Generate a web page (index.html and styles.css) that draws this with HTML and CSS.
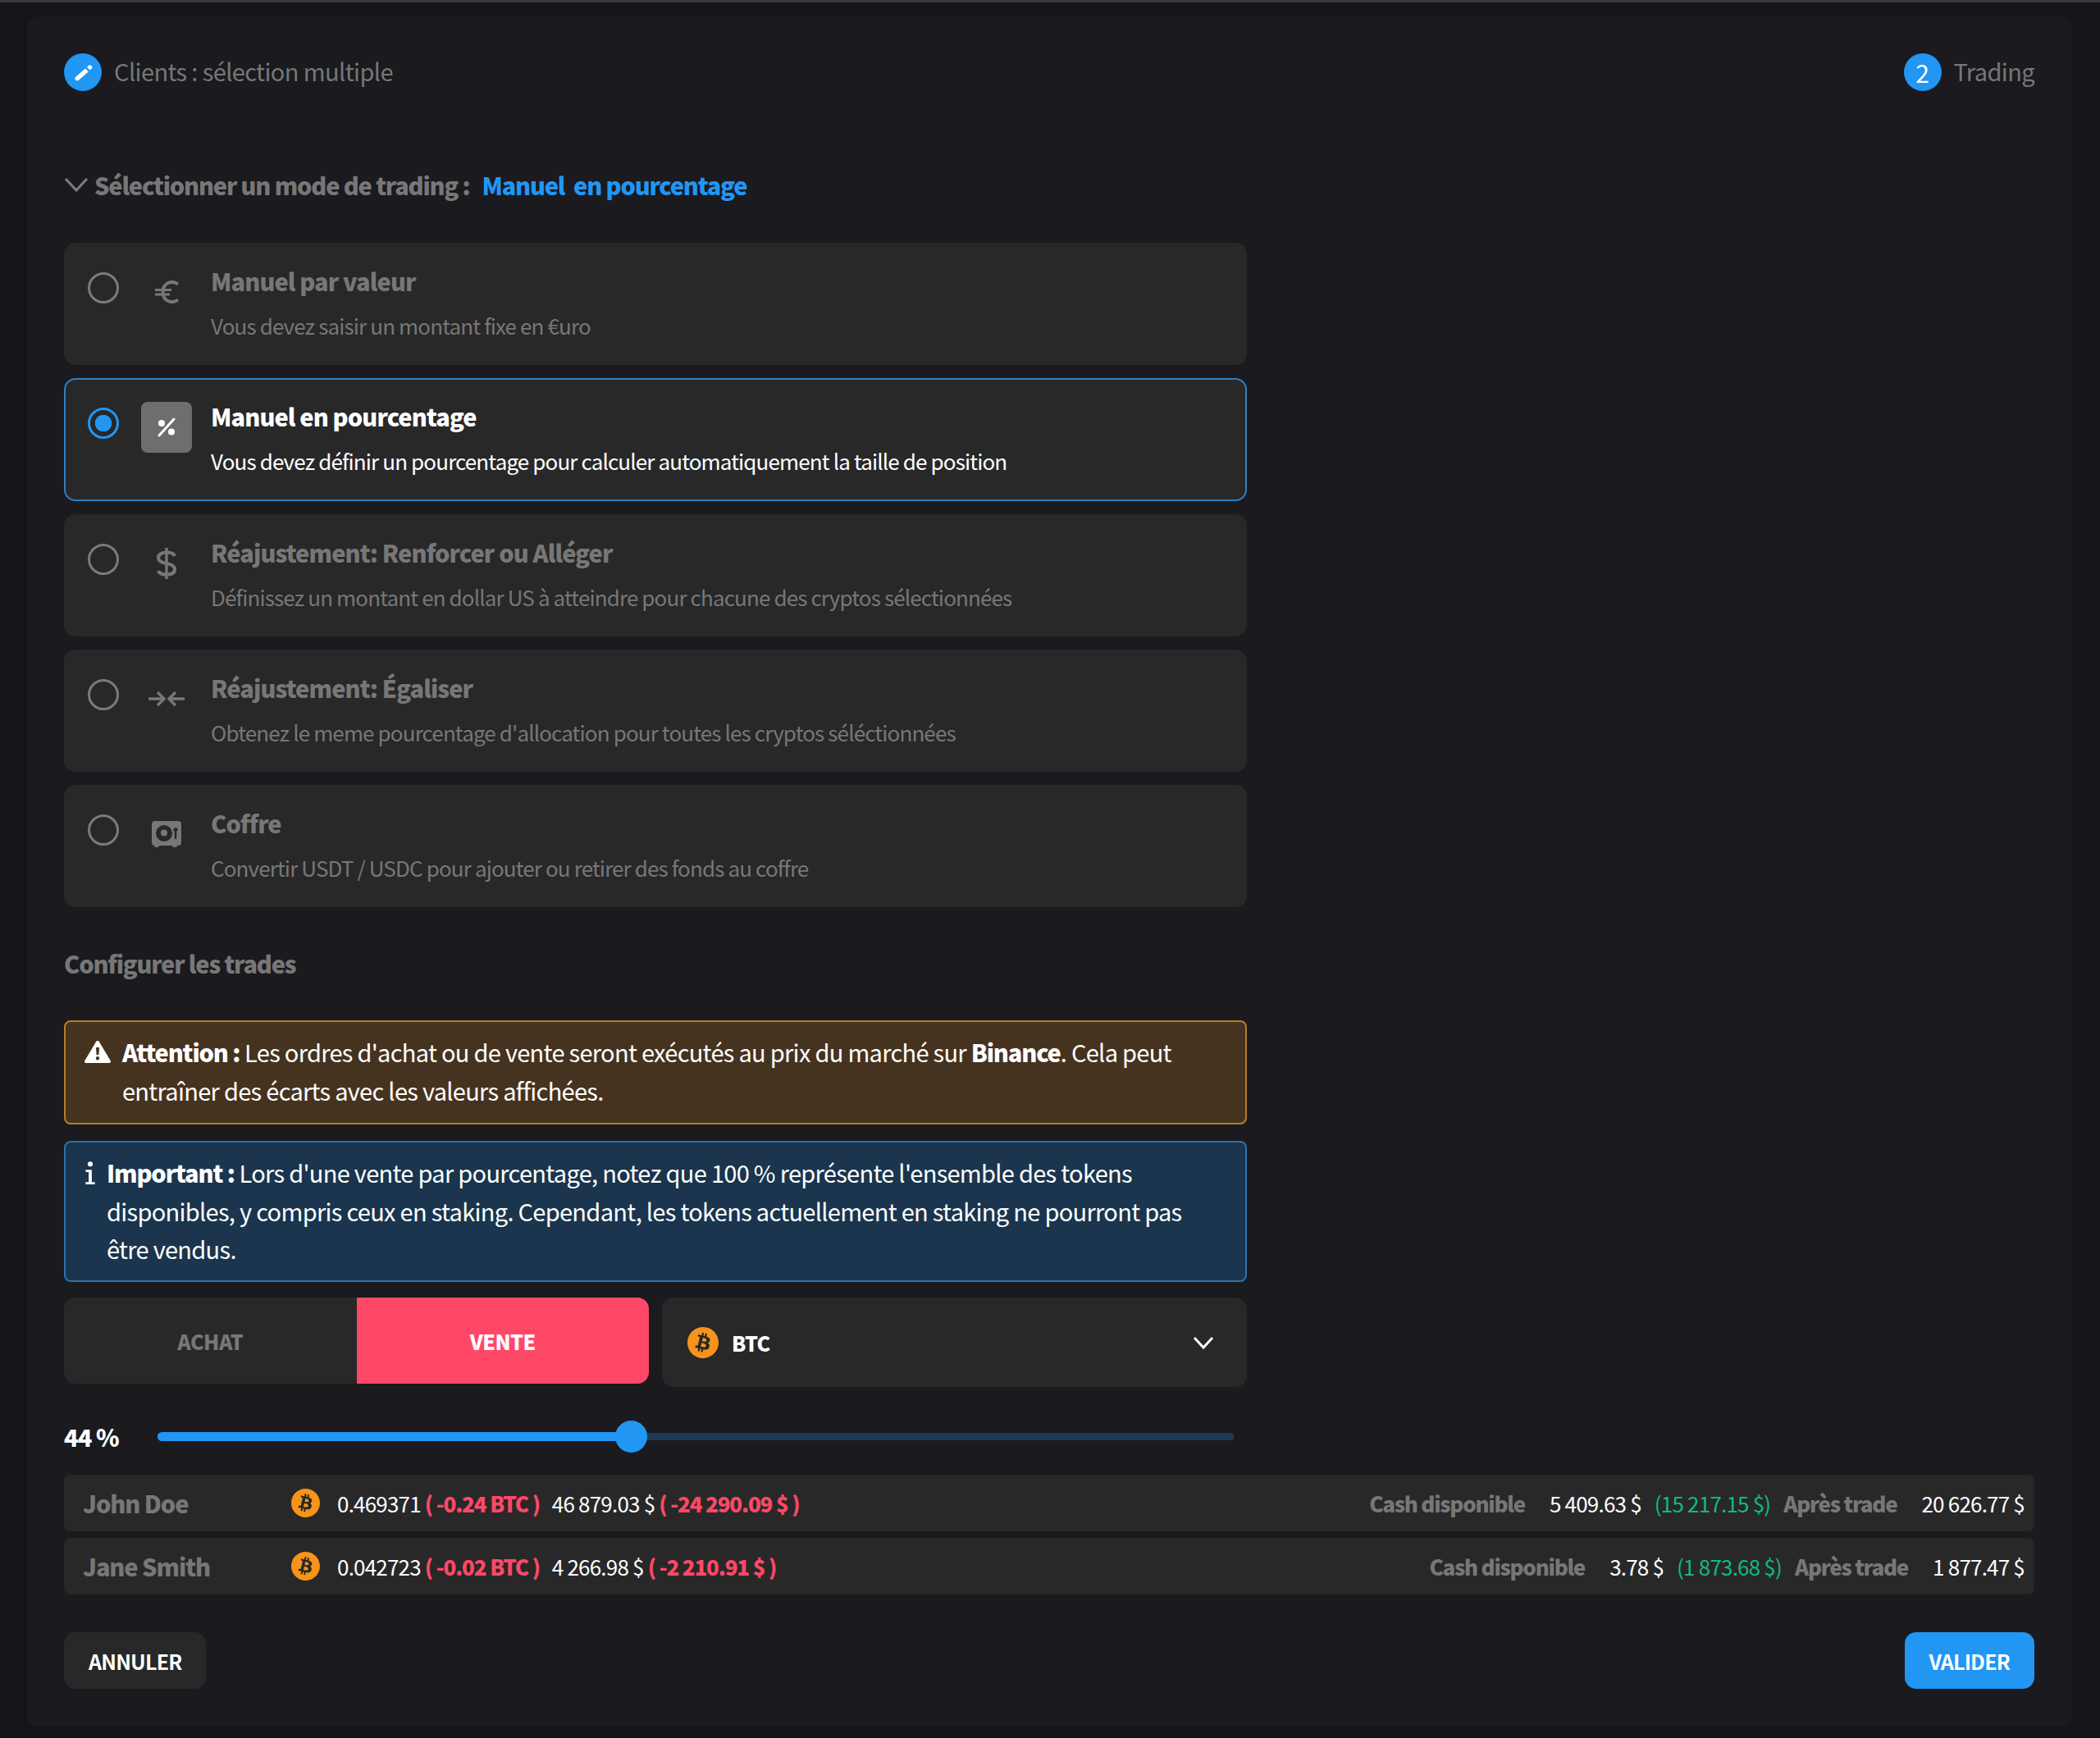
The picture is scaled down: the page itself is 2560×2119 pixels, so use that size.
FILE: index.html
```html
<!DOCTYPE html>
<html lang="fr">
<head>
<meta charset="utf-8">
<title>Trading</title>
<link rel="stylesheet" href="styles.css">
</head>
<body>
<svg class="defs" width="0" height="0" aria-hidden="true">
  <symbol id="btc" viewBox="0 0 24 24"><path fill="#f7931a" d="M23.638 14.904c-1.602 6.43-8.113 10.34-14.542 8.736C2.67 22.05-1.244 15.525.362 9.105 1.962 2.67 8.475-1.243 14.9.358c6.43 1.605 10.342 8.115 8.738 14.548v-.002zm-6.35-4.613c.24-1.59-.974-2.45-2.64-3.03l.54-2.153-1.315-.33-.525 2.107c-.345-.087-.705-.167-1.064-.25l.526-2.127-1.32-.33-.54 2.165c-.285-.067-.565-.132-.84-.2l-1.815-.45-.35 1.407s.975.225.955.236c.535.136.63.486.615.766l-1.477 5.92c-.075.166-.24.406-.614.314.015.02-.96-.24-.96-.24l-.66 1.51 1.71.426.93.242-.54 2.19 1.32.327.54-2.17c.36.1.705.19 1.05.273l-.51 2.154 1.32.33.545-2.19c2.24.427 3.93.257 4.64-1.774.57-1.637-.03-2.58-1.217-3.196.854-.193 1.5-.76 1.68-1.93h.01zm-3.01 4.22c-.404 1.64-3.157.75-4.05.53l.72-2.9c.896.23 3.757.67 3.33 2.37zm.41-4.24c-.37 1.49-2.662.735-3.405.55l.654-2.64c.744.18 3.137.524 2.75 2.084v.006z"/></symbol>
</svg>
<div class="topbar"></div>
<main class="panel">
  <header class="steps">
    <div class="step">
      <span class="step-dot"><svg width="28" height="28" viewBox="0 0 28 28"><path d="M4.500 23.500v-3L17 9.500l3.700 4L8 24.500z" fill="#fff"/><path d="M19 7.700l2.200-1.900a2 2 0 0 1 2.800.2l.9 1a2 2 0 0 1-.2 2.800l-2.100 1.800z" fill="#fff"/></svg></span>
      <span class="step-label">Clients : sélection multiple</span>
    </div>
    <div class="step">
      <span class="step-dot">2</span>
      <span class="step-label">Trading</span>
    </div>
  </header>

  <h2 class="mode-heading">
    <svg class="mode-chevron" width="30" height="20" viewBox="0 0 30 20"><path d="M2 3l13 14L28 3" fill="none" stroke="#7d7d7d" stroke-width="3"/></svg>
    <span>Sélectionner un mode de trading :</span>
    <span class="mode-value">Manuel&nbsp; en pourcentage</span>
  </h2>

  <section class="options">
    <article class="option">
      <span class="radio"></span>
      <span class="opt-icon"><svg width="32" height="28" viewBox="0 0 32 28"><path d="M30 4.500C26.500 1.800 22 1.300 18 3c-4.500 2-6.500 6-6.500 11s2 9 6.500 11c4 1.700 8.500 1.200 12-1.500" fill="none" stroke="#777" stroke-width="4"/><path d="M2 11.500h20M2 17h18" stroke="#777" stroke-width="3"/></svg></span>
      <div class="opt-text"><h3>Manuel par valeur</h3><p>Vous devez saisir un montant fixe en €uro</p></div>
    </article>
    <article class="option active">
      <span class="radio"></span>
      <span class="opt-icon"><svg width="26" height="26" viewBox="0 0 26 26"><path d="M4 23L22 3" stroke="#fff" stroke-width="3" stroke-linecap="round"/><circle cx="7" cy="8" r="4" fill="#fff"/><circle cx="19" cy="18.500" r="4" fill="#fff"/></svg></span>
      <div class="opt-text"><h3>Manuel en pourcentage</h3><p>Vous devez définir un pourcentage pour calculer automatiquement la taille de position</p></div>
    </article>
    <article class="option">
      <span class="radio"></span>
      <span class="opt-icon"><svg width="26" height="40" viewBox="0 0 26 40"><path d="M13 1v38" stroke="#777" stroke-width="3.400"/><path d="M23 11c-1-3-5-4.500-10-4.500S3 8.500 3 13s4 6 10 7 10 2.500 10 7-4 6.500-10 6.500S4 32 3 29" fill="none" stroke="#777" stroke-width="4.200"/></svg></span>
      <div class="opt-text"><h3>Réajustement: Renforcer ou Alléger</h3><p>Définissez un montant en dollar US à atteindre pour chacune des cryptos sélectionnées</p></div>
    </article>
    <article class="option">
      <span class="radio"></span>
      <span class="opt-icon"><svg width="44" height="20" viewBox="0 0 44 20"><path d="M0 10h19M11 2l8 8-8 8M44 10H25M33 2l-8 8 8 8" fill="none" stroke="#777" stroke-width="3.400"/></svg></span>
      <div class="opt-text"><h3>Réajustement: Égaliser</h3><p>Obtenez le meme pourcentage d'allocation pour toutes les cryptos séléctionnées</p></div>
    </article>
    <article class="option">
      <span class="radio"></span>
      <span class="opt-icon"><svg width="36" height="32" viewBox="0 0 36 32"><path fill="#777" fill-rule="evenodd" d="M4 0h28a4 4 0 0 1 4 4v22a4 4 0 0 1-4 4h-1l-1 2h-4l-1-2H9l-1 2H4l-1-2a4 4 0 0 1-3-4V4a4 4 0 0 1 4-4zm11 5a9.500 9.500 0 1 0 0 20 9.500 9.500 0 0 0 0-20zm0 5.500a4 4 0 1 1 0 8 4 4 0 0 1 0-8zM29 8a2.500 2.500 0 0 0-1.200 4.700V22h2.400v-9.300A2.500 2.500 0 0 0 29 8z"/></svg></span>
      <div class="opt-text"><h3>Coffre</h3><p>Convertir USDT / USDC pour ajouter ou retirer des fonds au coffre</p></div>
    </article>
  </section>

  <h2 class="config-title">Configurer les trades</h2>

  <section class="notices">
    <div class="notice warn">
      <svg class="notice-icon" width="32" height="27" viewBox="0 0 32 27"><path fill="#fff" fill-rule="evenodd" d="M16 0c.9 0 1.600.5 2 1.200l13.700 23c.8 1.300-.2 2.800-1.700 2.800H2c-1.500 0-2.500-1.500-1.700-2.800L14 1.200C14.400.5 15.100 0 16 0zm-2 8l.6 9h2.800l.6-9zm2 11a2.200 2.200 0 1 0 0 4.400 2.200 2.200 0 0 0 0-4.400z"/></svg>
      <p><strong>Attention :</strong> Les ordres d'achat ou de vente seront exécutés au prix du marché sur <strong>Binance</strong>. Cela peut entraîner des écarts avec les valeurs affichées.</p>
    </div>
    <div class="notice info">
      <svg class="notice-icon" width="14" height="28" viewBox="0 0 14 30"><circle cx="7" cy="3.500" r="3.300" fill="#fff"/><path d="M1 11h8v16h4v3H1v-3h4V14H1z" fill="#fff"/></svg>
      <p><strong>Important :</strong> Lors d'une vente par pourcentage, notez que 100 % représente l'ensemble des tokens disponibles, y compris ceux en staking. Cependant, les tokens actuellement en staking ne pourront pas être vendus.</p>
    </div>
  </section>

  <section class="controls">
    <div class="tabs">
      <span class="tab">ACHAT</span>
      <span class="tab sell">VENTE</span>
    </div>
    <div class="select">
      <svg class="coin-lg" width="38" height="38"><use href="#btc"/></svg>
      <span class="select-label">BTC</span>
      <svg class="select-chevron" width="26" height="16" viewBox="0 0 26 16"><path d="M2 2l11 12L24 2" fill="none" stroke="#fff" stroke-width="3"/></svg>
    </div>
  </section>

  <section class="slider-row">
    <span class="slider-value">44 %</span>
    <div class="slider">
      <div class="slider-fill"></div>
      <div class="slider-thumb"></div>
    </div>
  </section>

  <section class="clients">
    <div class="client">
      <span class="client-name">John Doe</span>
      <svg class="coin" width="35" height="35"><use href="#btc"/></svg>
      <span class="val">0.469371</span><b class="neg">( -0.24 BTC )</b>
      <span class="val wide">46 879.03 $</span><b class="neg">( -24 290.09 $ )</b>
      <div class="cash">
        <b class="lbl">Cash disponible</b><span class="val">5 409.63 $</span><span class="pos">(15 217.15 $)</span>
        <b class="lbl">Après trade</b><span class="val">20 626.77 $</span>
      </div>
    </div>
    <div class="client">
      <span class="client-name">Jane Smith</span>
      <svg class="coin" width="35" height="35"><use href="#btc"/></svg>
      <span class="val">0.042723</span><b class="neg">( -0.02 BTC )</b>
      <span class="val wide">4 266.98 $</span><b class="neg">( -2 210.91 $ )</b>
      <div class="cash">
        <b class="lbl">Cash disponible</b><span class="val">3.78 $</span><span class="pos">(1 873.68 $)</span>
        <b class="lbl">Après trade</b><span class="val">1 877.47 $</span>
      </div>
    </div>
  </section>

  <footer class="actions">
    <button class="btn">ANNULER</button>
    <button class="btn primary">VALIDER</button>
  </footer>
</main>
</body>
</html>
```
FILE: styles.css
```css
* { box-sizing: border-box; }
html, body { margin: 0; padding: 0; }
body {
  background: #141519;
  height: 2119px;
  overflow: hidden;
  font-family: "Noto Sans CJK SC", "Noto Sans", sans-serif;
  color: #fff;
}
.defs { position: absolute; }
.topbar { height: 3px; background: #3a3b40; }
.panel {
  margin: 17px 34px 0 33px;
  height: 2085px;
  padding: 45px 46px 0 45px;
  background: #1a1a1f;
  border-radius: 14px;
}
.steps { display: flex; justify-content: space-between; height: 46px; }
.step { display: flex; align-items: center; gap: 15px; }
.step-dot {
  width: 46px; height: 46px; border-radius: 50%;
  background: #2196f3;
  display: flex; align-items: center; justify-content: center;
  font-size: 30px; line-height: 46px;
}
.step-label { font-size: 29px; line-height: 44px; margin-bottom: 4px; letter-spacing: -0.6px; color: #777; }
.mode-heading {
  margin: 92px 0 0;
  height: 44px;
  display: flex; align-items: center;
  font-size: 29px; line-height: 44px; font-weight: 900; letter-spacing: -1.2px; color: #777;
}
.mode-chevron { margin-right: 7px; }
.mode-value { color: #2196f3; margin-left: 15px; }
.options { margin-top: 49px; display: flex; flex-direction: column; gap: 16px; width: 1442px; }
.option {
  height: 149.250px;
  padding: 26px 24px 0 29px;
  display: flex;
  background: #282829;
  border-radius: 14px;
  color: #777;
}
.option.active { border: 2px solid #2b80c4; padding: 24px 22px 0 27px; color: #fff; }
.radio {
  width: 38px; height: 38px; margin-top: 10px;
  border: 3px solid #7b7b7b; border-radius: 50%;
  flex: none;
}
.active .radio { border-color: #2196f3; background: radial-gradient(circle, #2196f3 0 10px, transparent 10.500px); }
.opt-icon {
  width: 62px; height: 62px; margin: 3px 23px 0 27px;
  display: flex; align-items: center; justify-content: center;
  border-radius: 8px; flex: none;
}
.active .opt-icon { background: #6e6e6e; }
.opt-text h3 { margin: -2px 0 0; font-size: 29px; line-height: 44px; font-weight: 900; letter-spacing: -0.9px; }
.opt-text p { margin: 11px 0 0; font-size: 26px; line-height: 44px; letter-spacing: -0.87px; }
.config-title { margin: 46px 0 0; font-size: 29px; line-height: 44px; font-weight: 900; letter-spacing: -1.2px; color: #777; }
.notices { margin-top: 48px; width: 1442px; display: flex; flex-direction: column; gap: 20px; }
.notice {
  display: flex;
  border-radius: 8px;
  border: 2px solid;
  font-size: 29px; line-height: 46.500px; letter-spacing: -0.7px;
}
.notice p { margin: 0; }
.notice strong { font-weight: 900; letter-spacing: -1.15px; }
.warn { height: 127px; padding: 13px 40px 0 23px; background: #46331f; border-color: #b87b2a; gap: 14px; }
.warn .notice-icon { margin-top: 10px; flex: none; }
.info { height: 172px; padding: 13px 40px 0 23px; background: #1a354d; border-color: #2c72b0; gap: 13px; }
.info .notice-icon { margin-top: 10px; flex: none; }
.controls { margin-top: 19px; width: 1442px; display: flex; gap: 16px; align-items: flex-start; }
.tabs { width: 713px; height: 105px; display: flex; border-radius: 14px; background: #282829; overflow: hidden; }
.tab {
  flex: 1; display: flex; align-items: center; justify-content: center;
  font-size: 25px; font-weight: 900; letter-spacing: -0.5px; color: #777;
}
.tab.sell { background: #ff4867; color: #fff; }
.select {
  flex: 1; height: 109px; display: flex; align-items: center;
  padding: 0 40px 0 31px;
  background: #282829; border-radius: 14px;
}
.select-label { margin-left: 16px; font-size: 25px; font-weight: 900; letter-spacing: -0.6px; }
.select-chevron { margin-left: auto; }
.slider-row { margin-top: 40px; height: 40px; display: flex; align-items: center; width: 1426px; }
.slider-value { width: 114px; font-size: 29px; font-weight: 900; letter-spacing: -1px; }
.slider { flex: 1; height: 9px; background: #1e3a55; border-radius: 3px; position: relative; }
.slider-fill { position: absolute; left: 0; top: -1px; height: 11px; width: 578px; background: #2196f3; border-radius: 6px; }
.slider-thumb { position: absolute; left: 558px; top: -15px; width: 39px; height: 39px; border-radius: 50%; background: #2196f3; }
.clients { margin-top: 27px; display: flex; flex-direction: column; gap: 8px; }
.client {
  height: 69px; display: flex; align-items: center;
  padding: 0 12px 0 23px;
  background: #282829; border-radius: 8px;
  font-size: 26px; letter-spacing: -0.8px;
}
.client-name { width: 254px; font-size: 29px; font-weight: 900; letter-spacing: -1.1px; color: #777; margin-bottom: 2px; }
.coin { flex: none; margin-right: 21px; }
.neg { color: #ff4867; margin-left: 5px; font-weight: 900; letter-spacing: -1.2px; }
.val.wide { margin-left: 15px; }
.cash { margin-left: auto; display: flex; align-items: center; }
.lbl { color: #777; font-weight: 900; margin-right: 30px; letter-spacing: -1.25px; }
.pos { color: #12b886; margin: 0 16px; }
.actions { margin-top: 46px; display: flex; justify-content: space-between; align-items: flex-start; }
.btn {
  height: 69px; padding: 0 30px;
  border: 0; border-radius: 14px;
  background: #282829; color: #fff;
  font: 700 25px "Noto Sans CJK SC", "Noto Sans", sans-serif;
  letter-spacing: -0.8px;
}
.btn.primary { background: #2196f3; }
```
